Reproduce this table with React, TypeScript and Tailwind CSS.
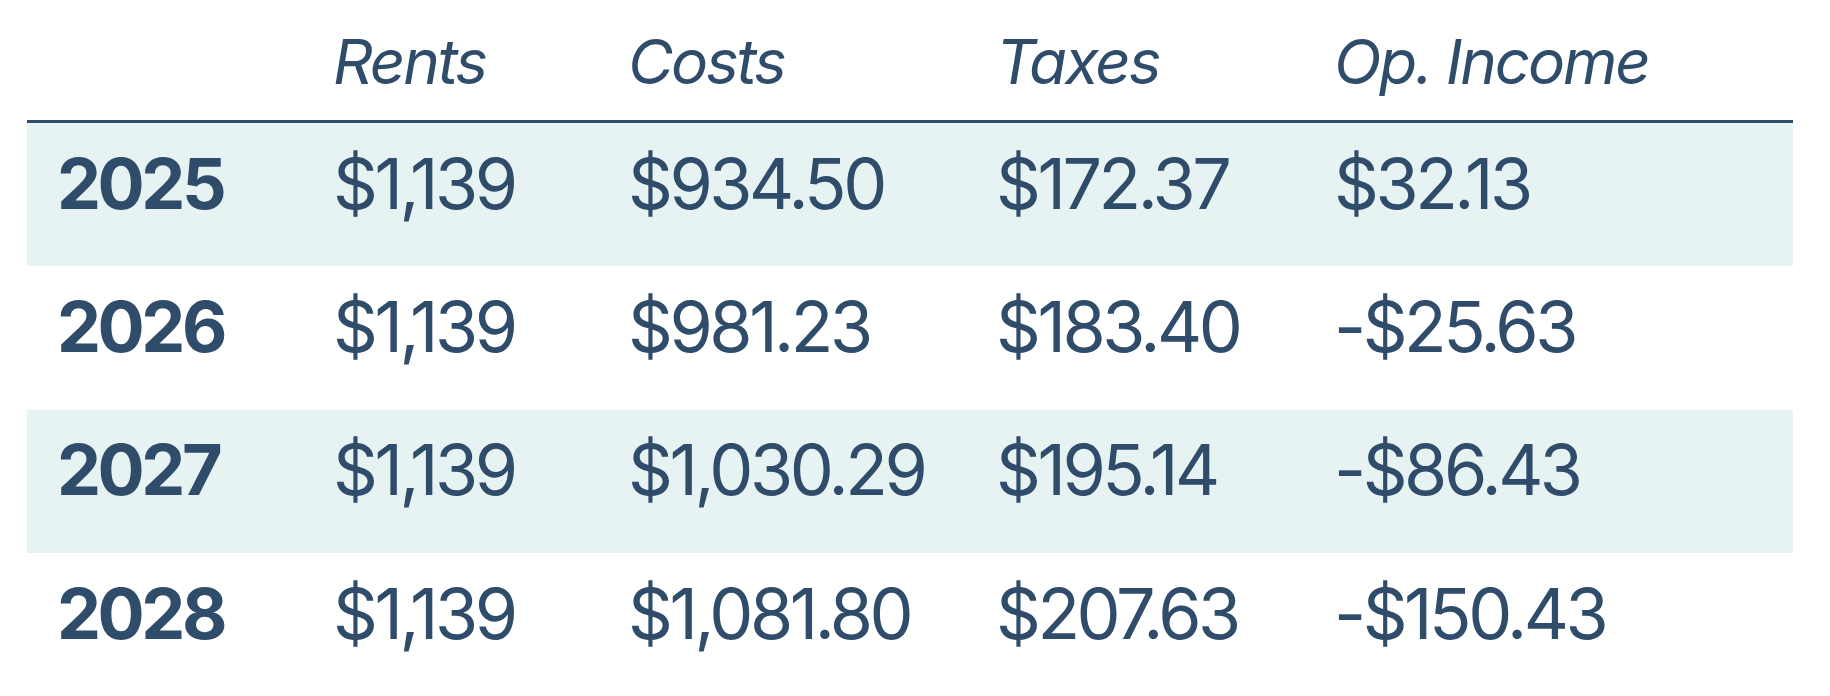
const rows = [
  { year: '2025', rents: '$1,139', costs: '$934.50', taxes: '$172.37', income: '$32.13' },
  { year: '2026', rents: '$1,139', costs: '$981.23', taxes: '$183.40', income: '-$25.63' },
  { year: '2027', rents: '$1,139', costs: '$1,030.29', taxes: '$195.14', income: '-$86.43' },
  { year: '2028', rents: '$1,139', costs: '$1,081.80', taxes: '$207.63', income: '-$150.43' },
];

const headers = ['Rents', 'Costs', 'Taxes', 'Op. Income'];

export default function App() {
  return (
    <div className="w-[1830px] h-[696px] bg-white overflow-hidden text-[#304c6b] font-['Inter','Liberation_Sans',sans-serif]">
      <div className="ml-[27px] w-[1766px]">
        <div className="grid grid-cols-[275px_295px_368px_338px_1fr] h-[120px] border-b-[3px] border-[#304c6b] box-content">
          <div />
          {headers.map((h) => (
            <div key={h} className="pl-[31px] pt-[24px] text-[62px] leading-[76px] italic tracking-[-2.2px]">
              {h}
            </div>
          ))}
        </div>
        {rows.map((r, i) => (
          <div
            key={r.year}
            className={`grid grid-cols-[275px_295px_368px_338px_1fr] items-center h-[143.3px] pb-[23px] text-[70px] tracking-[-3.5px] ${
              i % 2 === 0 ? 'bg-[#e7f3f3]' : 'bg-white'
            }`}
          >
            <div className="pl-[30px] font-bold">{r.year}</div>
            <div className="pl-[31px]">{r.rents}</div>
            <div className="pl-[31px]">{r.costs}</div>
            <div className="pl-[31px]">{r.taxes}</div>
            <div className="pl-[31px]">{r.income}</div>
          </div>
        ))}
      </div>
    </div>
  );
}
